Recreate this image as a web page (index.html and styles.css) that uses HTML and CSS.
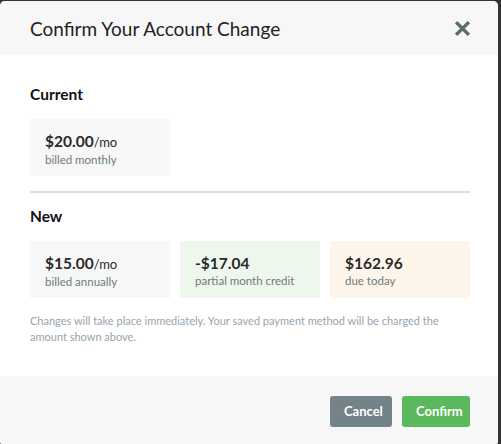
FILE: index.html
```html
<!DOCTYPE html>
<html lang="en">
<head>
<meta charset="UTF-8" />
<meta name="viewport" content="width=device-width, initial-scale=1" />
<title>Confirm Your Account Change</title>
<link rel="stylesheet" href="styles.css">
</head>
<body>
  <div class="modal">
    <div class="modal-header">
      <h2>Confirm Your Account Change</h2>
      <button class="close" aria-label="Close">
        <svg width="15" height="15" viewBox="0 0 16 16"><path d="M2.5 2.5 L13.5 13.5 M13.5 2.5 L2.5 13.5" stroke="#5b6b70" stroke-width="3.6" stroke-linecap="square"/></svg>
      </button>
    </div>

    <div class="modal-body">
      <h3>Current</h3>
      <div class="plans">
        <div class="plan">
          <div class="amount">$20.00<span class="per">/mo</span></div>
          <div class="sub">billed monthly</div>
        </div>
      </div>

      <hr class="divider" />

      <h3>New</h3>
      <div class="plans">
        <div class="plan">
          <div class="amount">$15.00<span class="per">/mo</span></div>
          <div class="sub">billed annually</div>
        </div>
        <div class="plan credit">
          <div class="amount">-$17.04</div>
          <div class="sub">partial month credit</div>
        </div>
        <div class="plan due">
          <div class="amount">$162.96</div>
          <div class="sub">due today</div>
        </div>
      </div>

      <p class="note">Changes will take place immediately. Your saved payment method will be charged the amount shown above.</p>
    </div>

    <div class="modal-footer">
      <button class="btn btn-cancel">Cancel</button>
      <button class="btn btn-confirm">Confirm</button>
    </div>
  </div>
</body>
</html>
```

FILE: styles.css
```css
body {
  margin: 0;
  background: #333;
  font-family: 'Lato', 'Noto Sans', sans-serif;
  color: #222;
}

.modal {
  width: 498px;
  margin-top: 1px;
  background: white;
  border-radius: 5px;
  overflow: hidden;
}

.modal-header {
  height: 54px;
  background: #f7f7f7;
  display: flex;
  align-items: center;
  justify-content: space-between;
  padding: 0 28px 0 30px;
}

.modal-header h2 {
  margin: 0;
  font-size: 19px;
  font-weight: 400;
  color: #222;
}

.close {
  border: none;
  background: none;
  padding: 0;
  display: flex;
  cursor: pointer;
}

.modal-body {
  padding: 30px 28px 31px 30px;
}

h3 {
  margin: 0 0 15px;
  font-size: 15.5px;
  font-weight: 700;
  color: #111;
  line-height: 19px;
}

.plans {
  display: flex;
  gap: 10px;
}

.plan {
  width: 140px;
  height: 57px;
  box-sizing: border-box;
  padding: 12px 15px 0;
  background: #f7f7f7;
}

.plan.credit { background: #eef7ec; }
.plan.due { background: #fdf5ea; }

.amount {
  font-size: 15.5px;
  font-weight: 700;
  color: #2a2a2a;
  line-height: 20px;
}

.per {
  font-size: 13px;
  font-weight: 400;
}

.sub {
  font-size: 11.5px;
  color: #6c7b80;
  line-height: 15px;
}

.divider {
  border: none;
  border-top: 2px solid #d8dee2;
  margin: 15px 0 14px;
  width: 440px;
}

.note {
  margin: 15px 0 0;
  font-size: 11px;
  line-height: 16px;
  color: #97a4ae;
  width: 445px;
}

.modal-footer {
  background: #f7f7f7;
  height: 70px;
  display: flex;
  justify-content: flex-end;
  align-items: center;
  gap: 10px;
  padding: 0 28px 0 30px;
}

.btn {
  height: 31px;
  border: none;
  border-radius: 3px;
  color: white;
  font-family: inherit;
  font-size: 13px;
  font-weight: 700;
  padding: 0 14px;
  cursor: pointer;
}

.btn-cancel { background: #738388; width: 62px; }
.btn-confirm { background: #5cb85c; width: 68px; }
```
